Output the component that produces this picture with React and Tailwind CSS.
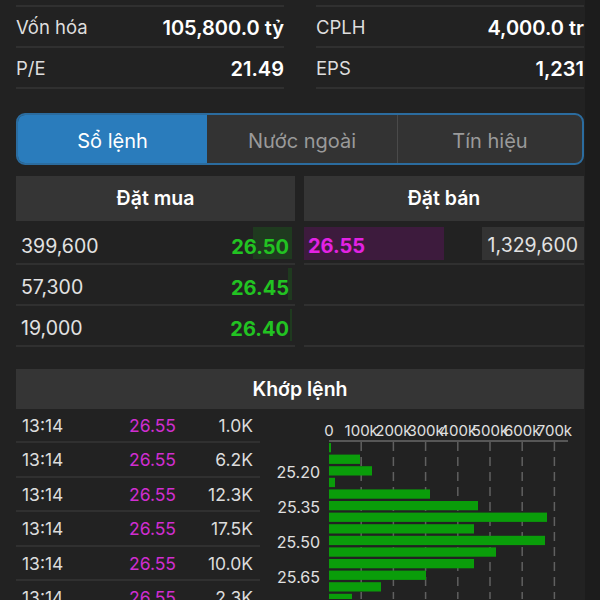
import React from 'react';

const stats = [
  [
    { label: 'Vốn hóa', value: '105,800.0 tỷ' },
    { label: 'P/E', value: '21.49' },
  ],
  [
    { label: 'CPLH', value: '4,000.0 tr' },
    { label: 'EPS', value: '1,231' },
  ],
];

const bids = [
  { vol: '399,600', price: '26.50', bar: 39 },
  { vol: '57,300', price: '26.45', bar: 4 },
  { vol: '19,000', price: '26.40', bar: 2 },
];

const trades = [
  { time: '13:14', price: '26.55', vol: '1.0K' },
  { time: '13:14', price: '26.55', vol: '6.2K' },
  { time: '13:14', price: '26.55', vol: '12.3K' },
  { time: '13:14', price: '26.55', vol: '17.5K' },
  { time: '13:14', price: '26.55', vol: '10.0K' },
  { time: '13:14', price: '26.55', vol: '2.3K' },
];

const bars = [2, 31, 43, 6, 101, 149, 218, 145, 216, 167, 145, 97, 52, 23];
const ticks = ['0', '100k', '200k', '300k', '400k', '500k', '600k', '700k'];
const priceLabels = { 2: '25.20', 5: '25.35', 8: '25.50', 11: '25.65' };

// chart coords are relative to x=260, y=410 of the page
const X0 = 69;
const STEP = 32.2;

const VolumeChart = () => (
  <svg width="324" height="190" viewBox="0 0 324 190" className="block">
    {ticks.map((t, i) => (
      <text
        key={t}
        x={X0 + i * STEP}
        y={27}
        textAnchor="middle"
        fontSize="15"
        fill="#e0e0e0"
        fontFamily="Inter, sans-serif"
      >
        {t}
      </text>
    ))}
    <line x1={X0} y1={32} x2={308} y2={32} stroke="#6a6a6a" strokeWidth="1.5" />
    {ticks.map((t, i) =>
      i === 0 ? null : (
        <line
          key={t}
          x1={X0 + i * STEP}
          y1={33}
          x2={X0 + i * STEP}
          y2={190}
          stroke="#606060"
          strokeWidth="1.5"
          strokeDasharray="9 6"
        />
      )
    )}
    {bars.map((w, i) => (
      <rect key={i} x={X0} y={34 + i * 11.6} width={w} height={9.3} fill="#0a9d0a" />
    ))}
    {Object.entries(priceLabels).map(([i, label]) => (
      <text
        key={label}
        x={60}
        y={34 + Number(i) * 11.6 + 12}
        textAnchor="end"
        fontSize="16"
        fill="#e0e0e0"
        fontFamily="Inter, sans-serif"
      >
        {label}
      </text>
    ))}
  </svg>
);

export default function App() {
  return (
    <div
      className="w-[600px] h-[600px] overflow-hidden bg-[#1c1c1c] flex"
      style={{ fontFamily: 'Inter, "Noto Sans", sans-serif' }}
    >
      <div className="w-[585px] bg-[#222222] pl-4 pr-[1px] pt-[5px]">
        {/* Stats */}
        <div className="grid grid-cols-2 gap-8">
          {stats.map((col, ci) => (
            <div key={ci} className="border-t-2 border-[#303030]">
              {col.map((s) => (
                <div
                  key={s.label}
                  className="h-[41px] pt-[3px] flex items-center justify-between border-b-2 border-[#303030]"
                >
                  <span className="text-[18.5px] text-[#dedede]">{s.label}</span>
                  <span className="text-[20px] font-semibold text-white">{s.value}</span>
                </div>
              ))}
            </div>
          ))}
        </div>

        {/* Tabs */}
        <div className="mt-[24px] h-[52px] pt-[3px] flex rounded-[9px] border-2 border-[#2b6c9f] overflow-hidden bg-[#333333]">
          <div className="-mt-[3px] w-[189px] bg-[#2a7cbc] flex items-center justify-center pt-[3px] text-[20px] text-white">
            Sổ lệnh
          </div>
          <div className="w-[190px] flex items-center justify-center text-[20px] text-[#9a9a9a]">
            Nước ngoài
          </div>
          <div className="-mt-[3px] flex-1 border-l border-[#4a4a4a] flex items-center justify-center pt-[3px] text-[20px] text-[#9a9a9a]">
            Tín hiệu
          </div>
        </div>

        {/* Order book */}
        <div className="mt-[11px] grid grid-cols-[279px_1fr] gap-[9px]">
          <div>
            <div className="h-[45px] bg-[#353535] flex items-center justify-center text-[19.5px] font-semibold text-white">
              Đặt mua
            </div>
            <div className="mt-[3px]">
              {bids.map((b) => (
                <div
                  key={b.price}
                  className="h-[41px] flex items-center border-b-2 border-[#303030] relative"
                >
                  <span className="pl-[5px] pt-[6px] text-[19.5px] text-[#e2e2e2]">{b.vol}</span>
                  <div className="flex-1" />
                  <div
                    className="absolute right-[3px] top-[3px] bottom-[4px] bg-[#1f3a1f]"
                    style={{ width: b.bar }}
                  />
                  <span className="relative pr-[6px] pt-[6px] text-[20px] font-bold text-[#22c322]">
                    {b.price}
                  </span>
                </div>
              ))}
            </div>
          </div>
          <div>
            <div className="h-[45px] bg-[#353535] flex items-center justify-center text-[19.5px] font-semibold text-white">
              Đặt bán
            </div>
            <div className="mt-[3px]">
              <div className="h-[41px] flex items-center justify-between border-b-2 border-[#303030] py-[3px]">
                <div className="w-[140px] h-full bg-[#3d1b3d] flex items-center pl-1 pt-[4px] text-[20px] font-bold text-[#e322e3]">
                  26.55
                </div>
                <div className="w-[102px] h-full bg-[#333333] flex items-center justify-end pr-[6px] pt-[4px] text-[19.5px] text-[#e2e2e2]">
                  1,329,600
                </div>
              </div>
              <div className="h-[41px] border-b-2 border-[#303030]" />
              <div className="h-[41px] border-b-2 border-[#303030]" />
            </div>
          </div>
        </div>

        {/* Matched */}
        <div className="mt-[22px] h-[40px] pt-[2px] bg-[#353535] flex items-center justify-center text-[19.5px] font-semibold text-white">
          Khớp lệnh
        </div>
        <div className="flex">
          <div className="w-[244px]">
            {trades.map((t, i) => (
              <div
                key={i}
                className="h-[34.4px] pt-[2px] flex items-center border-b-2 border-[#303030] text-[17.5px]"
              >
                <span className="w-[100px] pl-[6px] text-[#dcdcdc]">{t.time}</span>
                <span className="w-[60px] text-right text-[#d02ed0]">{t.price}</span>
                <span className="w-[77px] text-right text-[#dcdcdc]">{t.vol}</span>
              </div>
            ))}
          </div>
          <VolumeChart />
        </div>
      </div>
      <div className="flex-1" />
    </div>
  );
}
